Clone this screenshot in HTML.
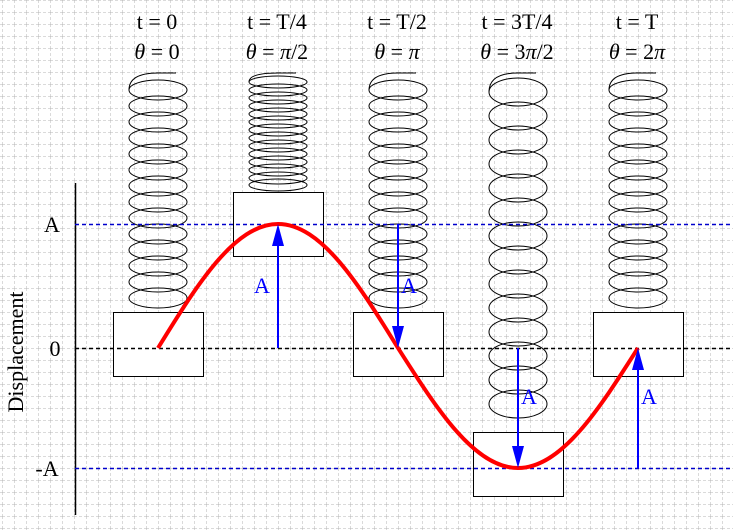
<!DOCTYPE html>
<html><head><meta charset="utf-8"><style>
html,body{margin:0;padding:0;background:#fff;width:733px;height:530px;overflow:hidden}
svg{display:block}
text{font-family:"Liberation Serif",serif}
</style></head><body>
<svg width="733" height="530" viewBox="0 0 733 530" xmlns="http://www.w3.org/2000/svg">
<defs>
<pattern id="grid" width="12" height="12" patternUnits="userSpaceOnUse" x="2" y="0">
<path d="M0 0V12M0 0H12" stroke="#b4b4b4" stroke-width="1" stroke-dasharray="3,2" fill="none"/>
</pattern>
</defs>
<rect width="733" height="530" fill="#fff"/>
<rect width="733" height="530" fill="url(#grid)"/>

<g font-size="22" text-anchor="middle" fill="#000">
<text x="157" y="29">t = 0</text><text x="157" y="59"><tspan font-style="italic">θ</tspan> = 0</text>
<text x="277" y="29">t = T/4</text><text x="277" y="59"><tspan font-style="italic">θ</tspan> = <tspan font-style="italic">π</tspan>/2</text>
<text x="397" y="29">t = T/2</text><text x="397" y="59"><tspan font-style="italic">θ</tspan> = <tspan font-style="italic">π</tspan></text>
<text x="517" y="29">t = 3T/4</text><text x="517" y="59"><tspan font-style="italic">θ</tspan> = 3<tspan font-style="italic">π</tspan>/2</text>
<text x="637" y="29">t = T</text><text x="637" y="59"><tspan font-style="italic">θ</tspan> = 2<tspan font-style="italic">π</tspan></text>
</g>

<g fill="none" stroke="#000" stroke-width="1">
<g id="s1">
<path d="M176 73H158Q129 73 129 90"/>
<ellipse cx="158" cy="90" rx="29" ry="10"/><ellipse cx="158" cy="106" rx="29" ry="10"/><ellipse cx="158" cy="122" rx="29" ry="10"/><ellipse cx="158" cy="138" rx="29" ry="10"/><ellipse cx="158" cy="154" rx="29" ry="10"/><ellipse cx="158" cy="170" rx="29" ry="10"/><ellipse cx="158" cy="186" rx="29" ry="10"/><ellipse cx="158" cy="202" rx="29" ry="10"/><ellipse cx="158" cy="218" rx="29" ry="10"/><ellipse cx="158" cy="234" rx="29" ry="10"/><ellipse cx="158" cy="250" rx="29" ry="10"/><ellipse cx="158" cy="266" rx="29" ry="10"/><ellipse cx="158" cy="282" rx="29" ry="10"/><ellipse cx="158" cy="298" rx="29" ry="10"/>
</g>
<use href="#s1" x="240"/>
<use href="#s1" x="480"/>
<path d="M296 73H278Q249 73 249 82"/>
<ellipse cx="278" cy="82" rx="29" ry="6"/><ellipse cx="278" cy="90" rx="29" ry="6"/><ellipse cx="278" cy="98" rx="29" ry="6"/><ellipse cx="278" cy="106" rx="29" ry="6"/><ellipse cx="278" cy="114" rx="29" ry="6"/><ellipse cx="278" cy="122" rx="29" ry="6"/><ellipse cx="278" cy="130" rx="29" ry="6"/><ellipse cx="278" cy="138" rx="29" ry="6"/><ellipse cx="278" cy="146" rx="29" ry="6"/><ellipse cx="278" cy="154" rx="29" ry="6"/><ellipse cx="278" cy="162" rx="29" ry="6"/><ellipse cx="278" cy="170" rx="29" ry="6"/><ellipse cx="278" cy="178" rx="29" ry="6"/><ellipse cx="278" cy="185" rx="29" ry="6"/>
<path d="M536 73H518Q489 73 489 92"/>
<ellipse cx="518" cy="92" rx="29" ry="14"/><ellipse cx="518" cy="116" rx="29" ry="14"/><ellipse cx="518" cy="140" rx="29" ry="14"/><ellipse cx="518" cy="164" rx="29" ry="14"/><ellipse cx="518" cy="188" rx="29" ry="14"/><ellipse cx="518" cy="212" rx="29" ry="14"/><ellipse cx="518" cy="236" rx="29" ry="14"/><ellipse cx="518" cy="260" rx="29" ry="14"/><ellipse cx="518" cy="284" rx="29" ry="14"/><ellipse cx="518" cy="308" rx="29" ry="14"/><ellipse cx="518" cy="332" rx="29" ry="14"/><ellipse cx="518" cy="356" rx="29" ry="14"/><ellipse cx="518" cy="380" rx="29" ry="14"/><ellipse cx="518" cy="404" rx="29" ry="14"/>
</g>

<g fill="#fff" stroke="#000" stroke-width="1">
<rect x="113.5" y="312.5" width="90" height="64"/>
<rect x="233.5" y="192.5" width="90" height="64"/>
<rect x="353.5" y="312.5" width="90" height="64"/>
<rect x="473.5" y="432.5" width="90" height="64"/>
<rect x="593.5" y="312.5" width="90" height="64"/>
</g>

<path d="M75.5 183V515" stroke="#000" stroke-width="1.5"/>
<g stroke-width="1.5" stroke-dasharray="4,3" fill="none">
<path d="M75 224.5H733" stroke="#0000cc"/>
<path d="M75 348.5H733" stroke="#000"/>
<path d="M75 468.5H733" stroke="#0000cc"/>
</g>
<g font-size="22" fill="#000" text-anchor="middle">
<text x="52" y="232">A</text>
<text x="55" y="356">0</text>
<text x="47" y="476">-A</text>
<text transform="translate(23,352) rotate(-90)">Displacement</text>
</g>

<path d="M158 348C197.1 284.5 234.6 224 278 224C321.4 224 358.9 284.5 398 348C437.1 409.5 474.6 468 518 468C561.4 468 598.9 409.5 638 348" fill="none" stroke="#ff0000" stroke-width="4"/>

<g stroke="#0000ff" stroke-width="2">
<path d="M278 348V240"/>
<path d="M398 224V332"/>
<path d="M518 348V452"/>
<path d="M638 468V364"/>
</g>
<g fill="#0000ff">
<path d="M278 224L272 246H284z"/>
<path d="M398 348L392 326H404z"/>
<path d="M518 468L512 446H524z"/>
<path d="M638 348L632 370H644z"/>
</g>
<g font-size="22" fill="#0000ff">
<text x="254" y="293">A</text>
<text x="401" y="293">A</text>
<text x="521" y="404">A</text>
<text x="641" y="404">A</text>
</g>
</svg>
</body></html>
